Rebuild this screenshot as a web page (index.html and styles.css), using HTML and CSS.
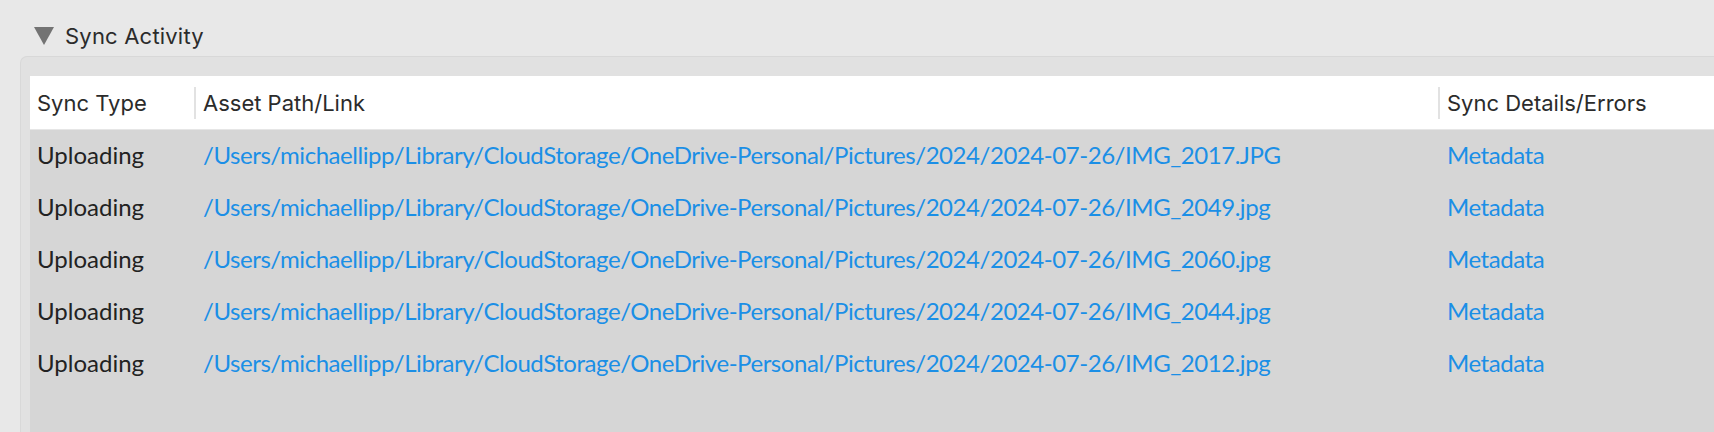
FILE: index.html
```html
<!DOCTYPE html>
<html>
<head>
<meta charset="utf-8">
<link rel="stylesheet" href="styles.css">
</head>
<body>
<div class="section-head">
  <span class="disclosure"></span>
  <span class="section-title">Sync Activity</span>
</div>
<div class="panel">
  <div class="table">
    <div class="thead">
      <div class="th c1">Sync Type</div>
      <div class="th c2">Asset Path/Link</div>
      <div class="th c3">Sync Details/Errors</div>
    </div>
    <div class="tbody">
      <div class="tr"><div class="td c1">Uploading</div><div class="td c2 link">/Users/michaellipp/Library/CloudStorage/OneDrive-Personal/Pictures/2024/2024-07-26/IMG_2017.JPG</div><div class="td c3 link">Metadata</div></div>
      <div class="tr"><div class="td c1">Uploading</div><div class="td c2 link">/Users/michaellipp/Library/CloudStorage/OneDrive-Personal/Pictures/2024/2024-07-26/IMG_2049.jpg</div><div class="td c3 link">Metadata</div></div>
      <div class="tr"><div class="td c1">Uploading</div><div class="td c2 link">/Users/michaellipp/Library/CloudStorage/OneDrive-Personal/Pictures/2024/2024-07-26/IMG_2060.jpg</div><div class="td c3 link">Metadata</div></div>
      <div class="tr"><div class="td c1">Uploading</div><div class="td c2 link">/Users/michaellipp/Library/CloudStorage/OneDrive-Personal/Pictures/2024/2024-07-26/IMG_2044.jpg</div><div class="td c3 link">Metadata</div></div>
      <div class="tr"><div class="td c1">Uploading</div><div class="td c2 link">/Users/michaellipp/Library/CloudStorage/OneDrive-Personal/Pictures/2024/2024-07-26/IMG_2012.jpg</div><div class="td c3 link">Metadata</div></div>
    </div>
  </div>
</div>
</body>
</html>
```
FILE: styles.css
```css
html, body { margin: 0; padding: 0; }
body {
  background: #e8e8e8;
  width: 1714px;
  height: 432px;
  overflow: hidden;
  font-family: Inter, "Liberation Sans", sans-serif;
  color: #2b2b2b;
}
.section-head {
  display: flex;
  align-items: center;
  height: 56px;
  padding: 16px 0 0 34px;
  box-sizing: border-box;
}
.disclosure {
  width: 0; height: 0;
  border-left: 10px solid transparent;
  border-right: 10px solid transparent;
  border-top: 18px solid #737373;
  margin-right: 11px;
}
.section-title { font-size: 22px; letter-spacing: 0.2px; }
.panel {
  margin-left: 20px;
  background: #e1e1e1;
  border: 1px solid #d8d8d8;
  border-right: none;
  border-bottom: none;
  border-top-left-radius: 7px;
  padding: 19px 0 0 9px;
  height: 376px;
  box-sizing: border-box;
  overflow: hidden;
}
.thead {
  display: flex;
  background: #fff;
  height: 54px;
  align-items: center;
  border-bottom: 1px solid #e6e6e6;
  box-sizing: border-box;
}
.th { font-size: 22px; height: 32px; display: flex; align-items: center; box-sizing: border-box; }
.c1 { width: 164px; padding-left: 7px; box-sizing: border-box; flex: none; }
.c2 { width: 1244px; padding-left: 7px; box-sizing: border-box; flex: none; }
.c3 { flex: 1; padding-left: 7px; }
.th.c2, .th.c3 { border-left: 2px solid #e2e2e2; }
.tbody { background: #d6d6d6; height: 400px; }
.tr {
  display: flex;
  height: 52px;
  padding-bottom: 3px;
  box-sizing: border-box;
  align-items: center;
  font-size: 24px;
  letter-spacing: -0.45px;
  font-family: Lato, "Open Sans", sans-serif;
  color: #222;
}
.tr + .tr { margin-top: 0; }
.td.c1 { letter-spacing: 0; }
.td.c2, .td.c3 { padding-left: 9px; }
.link { color: #1b8fe6; }
.td { white-space: nowrap; }
```
